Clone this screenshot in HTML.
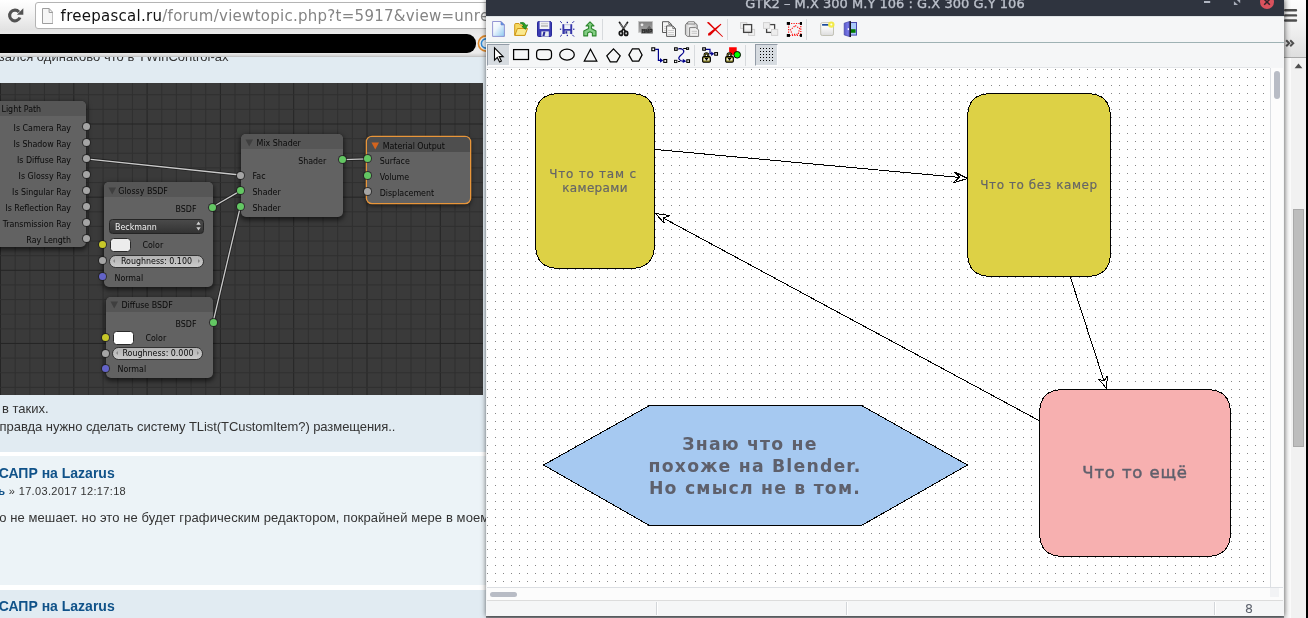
<!DOCTYPE html>
<html lang="ru">
<head>
<meta charset="utf-8">
<title>GTK2 – САПР на Lazarus</title>
<style>
html,body{margin:0;padding:0;}
body{width:1308px;height:618px;overflow:hidden;position:relative;background:#fff;font-family:"Liberation Sans","DejaVu Sans",sans-serif;}
.abs{position:absolute;}
/* ---------- browser (left) ---------- */
#br{position:absolute;left:0;top:0;width:1308px;height:618px;overflow:hidden;background:#fff;}
#br,#gtk,#rc,#rs{will-change:transform;}
#br .tb{position:absolute;left:0;top:0;width:1308px;height:30px;background:linear-gradient(#ffffff,#f7f7f7 35%,#e2e2e2);}
#br .bm{position:absolute;left:0;top:30px;width:1308px;height:27px;background:linear-gradient(#e6e6e6,#ececec 20%,#ebebeb 85%,#d4d4d4 96%,#b9b9b9);}
#url{position:absolute;left:34.5px;top:2px;width:700px;height:27px;box-sizing:border-box;border:1px solid #b4b4b4;border-radius:3px;background:#fff;}
#url .t{position:absolute;left:25.1px;top:3.7px;font:15px/19px "DejaVu Sans","Liberation Sans",sans-serif;color:#111;white-space:nowrap;letter-spacing:0.27px;}
#url .t span{color:#848484;}
#blk{position:absolute;left:-20px;top:34px;width:496px;height:19px;background:#000;border-radius:0 9px 9px 0;}
#forum{position:absolute;left:0;top:57px;width:1290px;height:561px;background:#fff;overflow:hidden;font-family:"Liberation Sans","DejaVu Sans",sans-serif;color:#333;}
.post{position:absolute;left:0;width:1290px;}
.p1{background:#e1ebf2;}
.p2{background:#ecf3f7;}
.ln{position:absolute;white-space:nowrap;font-size:13px;line-height:16px;color:#333;}
.h3{position:absolute;white-space:nowrap;font-size:14px;line-height:18px;font-weight:bold;color:#105289;}
.au{position:absolute;white-space:nowrap;font-size:11px;line-height:14px;color:#333;}
.au b{color:#105289;}
/* ---------- blender ---------- */
#bl{position:absolute;left:0;top:26px;width:483px;height:312px;background:#3a3a3a;overflow:hidden;font-family:"Liberation Sans","DejaVu Sans",sans-serif;}
.node{position:absolute;background:#626262;border-radius:5px;box-shadow:0 2px 5px 1px rgba(0,0,0,.6);}
.node .hd{position:absolute;left:0;top:0;right:0;height:15px;background:#565656;border-radius:5px 5px 0 0;}
.nt{position:absolute;white-space:nowrap;font:8.8px/12px "DejaVu Sans Condensed","Liberation Sans",sans-serif;color:#0a0a0a;}
.dd{position:absolute;box-sizing:border-box;background:linear-gradient(#4a4a4a,#333);border:1px solid #242424;border-radius:3.5px;}
.dd span{position:absolute;left:5px;top:0.6px;font:8.8px/12px "DejaVu Sans Condensed","Liberation Sans",sans-serif;color:#f2f2f2;}
.sw{position:absolute;box-sizing:border-box;background:#ececec;border:1px solid #2a2a2a;border-radius:3.5px;}
.pill{position:absolute;box-sizing:border-box;background:linear-gradient(#b4b4b4,#cacaca);border:1px solid #333;border-radius:7px;text-align:center;}
.pill span{position:absolute;left:0;right:0;top:-0.4px;font:8.8px/12px "DejaVu Sans Condensed","Liberation Sans",sans-serif;color:#0a0a0a;}
.pill:before,.pill:after{content:"";position:absolute;top:3.4px;border:2.5px solid transparent;}
.pill:before{left:1px;border-right-color:#8a8a8a;}
.pill:after{right:1px;border-left-color:#8a8a8a;}
.sk{position:absolute;width:7px;height:7px;border-radius:50%;box-shadow:0 0 0 1px rgba(30,30,30,.75);}
.sg{background:#a5a5a5;}
.sn{background:#63c763;}
.sy{background:#c7c729;}
.sb{background:#6363c7;}
/* ---------- gtk window ---------- */
#gtk{position:absolute;left:486px;top:0;width:798px;height:616px;background:#f5f6f7;box-shadow:0 0 5px 0 rgba(0,0,0,.6);overflow:hidden;}
#ttl{position:absolute;left:0;top:0;width:798px;height:16px;background:#2f343f;}
#ttl .t{position:absolute;left:0;width:798px;top:-4px;text-align:center;font:13px/16px "DejaVu Sans","Liberation Sans",sans-serif;color:#bcc1cb;white-space:nowrap;letter-spacing:0.02px;-webkit-text-stroke:0.35px #bcc1cb;}
#tb1{position:absolute;left:0;top:16px;width:798px;height:26px;background:#f5f6f7;border-top:1px solid #dfe4e6;box-sizing:border-box;}
#tbl{position:absolute;left:0;top:42px;width:798px;height:1px;background:#9fb2b4;}
#tb2{position:absolute;left:0;top:43px;width:798px;height:25px;background:#f5f6f7;}
.ic{position:absolute;width:16px;height:16px;overflow:visible;}
.sep{position:absolute;width:1px;background:#d7dadd;}
.prs{position:absolute;background:#d6dbe0;border:1px solid #929ba6;border-right-color:#fbfbfc;border-bottom-color:#fbfbfc;box-sizing:border-box;}
#cv{position:absolute;left:1px;top:68px;width:783px;height:519px;background:#fff;overflow:hidden;box-shadow:0 -1px 0 #e3e5e8;}
#vs{position:absolute;left:784px;top:68px;width:13px;height:519px;background:#fcfcfc;border-left:1px solid #dcdfe3;box-sizing:border-box;}
#hs{position:absolute;left:1px;top:587px;width:796px;height:14px;background:#fcfcfc;border-top:1px solid #dcdfe3;border-bottom:1px solid #dcdcdc;box-sizing:border-box;}
.th{position:absolute;background:#b8bcc5;border-radius:3px;}
#st{position:absolute;left:0;top:601px;width:798px;height:15px;background:#f5f6f7;}
#st .d{position:absolute;top:1px;width:2px;height:13px;background:#fff;border-left:1px solid #d3d6da;box-sizing:border-box;}
#st .n{position:absolute;left:759px;top:0.9px;font:12.5px/14px "DejaVu Sans","Liberation Sans",sans-serif;color:#5c616c;}
/* ---------- right chrome ---------- */
#rc{position:absolute;left:1284px;top:0;width:22px;height:58px;background:linear-gradient(#fdfdfd,#f2f2f2 45%,#dedede);border-bottom:1px solid #a9a9a9;box-sizing:border-box;}
#rs{position:absolute;left:1284px;top:58px;width:22px;height:560px;background:#f1f1f1;}
#rs .w{position:absolute;left:0;top:0;width:7px;height:561px;background:#fdfdfd;}
#rsh{position:absolute;left:1284px;top:0;width:7px;height:618px;background:linear-gradient(90deg,rgba(0,0,0,.10),rgba(0,0,0,.05) 45%,rgba(0,0,0,0));}
#rs .t{position:absolute;left:9px;top:151px;width:11px;height:238px;background:#bdbdbd;border:1px solid #a9a9a9;box-sizing:border-box;}
#rk{position:absolute;left:1306px;top:0;width:2px;height:618px;background:#000;}
</style>
</head>
<body>
<div id="br">
  <div class="tb"></div>
  <div class="bm"></div>
  <svg class="abs" style="left:7px;top:7px" width="18" height="17" viewBox="0 0 18 17"><path d="M12.96 10.50 A5.35 5.35 0 1 1 11.98 4.92" fill="none" stroke="#525252" stroke-width="3.1"/><path d="M16.3 1.2 V7.8 H9.9 Z" fill="#525252"/></svg>
  <div id="url">
    <svg class="abs" style="left:6.2px;top:4.5px" width="11.4" height="16" viewBox="0 0 12 16" preserveAspectRatio="none"><path d="M0.5 0.5 H7.5 L11.5 4.5 V15.5 H0.5 Z" fill="#f6f6f6" stroke="#9a9a9a"/><path d="M7.5 0.5 V4.5 H11.5" fill="none" stroke="#9a9a9a"/></svg>
    <div class="t">freepascal.ru<span>/forum/viewtopic.php?t=5917&amp;view=unread#unread</span></div>
  </div>
  <div id="blk"></div>
  <svg class="abs" style="left:476px;top:34px" width="20" height="20" viewBox="0 0 20 20"><circle cx="10" cy="9.5" r="7.6" fill="#f3ede6" stroke="#e08a2c" stroke-width="1.6"/><circle cx="10" cy="9.5" r="4.6" fill="#e9f2fa" stroke="#2f8ad8" stroke-width="1.6"/></svg>
  <div id="forum">
    <div class="post p1" style="top:0;height:395px;"></div>
    <div class="ln" style="left:-20.8px;top:-7.7px;letter-spacing:0.02px;">сказался одинаково что в TWinControl-ах</div>
    <div class="post p2" style="top:399px;height:129px;"></div>
    <div class="post p1" style="top:533px;height:90px;"></div>
    <div class="ln" style="left:2px;top:344px;">в таких.</div>
    <div class="ln" style="left:-13.2px;top:362.1px;letter-spacing:-0.073px;">И правда нужно сделать систему TList(TCustomItem?) размещения..</div>
    <div class="h3" style="left:-27.8px;top:406.8px;">Re: САПР на Lazarus</div>
    <div class="au" style="left:-68.3px;top:427px;letter-spacing:0.34px;"><b>Лекс Айринь</b> » 17.03.2017 12:17:18</div>
    <div class="ln" style="left:-13.2px;top:453px;letter-spacing:0.095px;">это не мешает. но это не будет графическим редактором, покрайней мере в моем понимании</div>
    <div class="h3" style="left:-27.8px;top:539.8px;">Re: САПР на Lazarus</div>
    <!-- BLENDER -->
    <div id="bl">
<!--BL-->
<svg class="abs" style="left:0;top:0" width="483" height="312" viewBox="0 0 483 312"><path d="M0.50 0 V312" stroke="#252525" stroke-width="1"/><path d="M15.16 0 V312" stroke="#303030" stroke-width="1"/><path d="M29.82 0 V312" stroke="#303030" stroke-width="1"/><path d="M44.48 0 V312" stroke="#303030" stroke-width="1"/><path d="M59.14 0 V312" stroke="#303030" stroke-width="1"/><path d="M73.80 0 V312" stroke="#252525" stroke-width="1"/><path d="M88.46 0 V312" stroke="#303030" stroke-width="1"/><path d="M103.12 0 V312" stroke="#303030" stroke-width="1"/><path d="M117.78 0 V312" stroke="#303030" stroke-width="1"/><path d="M132.44 0 V312" stroke="#303030" stroke-width="1"/><path d="M147.10 0 V312" stroke="#252525" stroke-width="1"/><path d="M161.76 0 V312" stroke="#303030" stroke-width="1"/><path d="M176.42 0 V312" stroke="#303030" stroke-width="1"/><path d="M191.08 0 V312" stroke="#303030" stroke-width="1"/><path d="M205.74 0 V312" stroke="#303030" stroke-width="1"/><path d="M220.40 0 V312" stroke="#252525" stroke-width="1"/><path d="M235.06 0 V312" stroke="#303030" stroke-width="1"/><path d="M249.72 0 V312" stroke="#303030" stroke-width="1"/><path d="M264.38 0 V312" stroke="#303030" stroke-width="1"/><path d="M279.04 0 V312" stroke="#303030" stroke-width="1"/><path d="M293.70 0 V312" stroke="#252525" stroke-width="1"/><path d="M308.36 0 V312" stroke="#303030" stroke-width="1"/><path d="M323.02 0 V312" stroke="#303030" stroke-width="1"/><path d="M337.68 0 V312" stroke="#303030" stroke-width="1"/><path d="M352.34 0 V312" stroke="#303030" stroke-width="1"/><path d="M367.00 0 V312" stroke="#252525" stroke-width="1"/><path d="M381.66 0 V312" stroke="#303030" stroke-width="1"/><path d="M396.32 0 V312" stroke="#303030" stroke-width="1"/><path d="M410.98 0 V312" stroke="#303030" stroke-width="1"/><path d="M425.64 0 V312" stroke="#303030" stroke-width="1"/><path d="M440.30 0 V312" stroke="#252525" stroke-width="1"/><path d="M454.96 0 V312" stroke="#303030" stroke-width="1"/><path d="M469.62 0 V312" stroke="#303030" stroke-width="1"/><path d="M0 11.74 H483" stroke="#303030" stroke-width="1"/><path d="M0 26.37 H483" stroke="#303030" stroke-width="1"/><path d="M0 41.00 H483" stroke="#252525" stroke-width="1"/><path d="M0 55.63 H483" stroke="#303030" stroke-width="1"/><path d="M0 70.26 H483" stroke="#303030" stroke-width="1"/><path d="M0 84.89 H483" stroke="#303030" stroke-width="1"/><path d="M0 99.52 H483" stroke="#303030" stroke-width="1"/><path d="M0 114.15 H483" stroke="#252525" stroke-width="1"/><path d="M0 128.78 H483" stroke="#303030" stroke-width="1"/><path d="M0 143.41 H483" stroke="#303030" stroke-width="1"/><path d="M0 158.04 H483" stroke="#303030" stroke-width="1"/><path d="M0 172.67 H483" stroke="#303030" stroke-width="1"/><path d="M0 187.30 H483" stroke="#252525" stroke-width="1"/><path d="M0 201.93 H483" stroke="#303030" stroke-width="1"/><path d="M0 216.56 H483" stroke="#303030" stroke-width="1"/><path d="M0 231.19 H483" stroke="#303030" stroke-width="1"/><path d="M0 245.82 H483" stroke="#303030" stroke-width="1"/><path d="M0 260.45 H483" stroke="#252525" stroke-width="1"/><path d="M0 275.08 H483" stroke="#303030" stroke-width="1"/><path d="M0 289.71 H483" stroke="#303030" stroke-width="1"/><path d="M0 304.34 H483" stroke="#303030" stroke-width="1"/></svg>
<div class="node" style="left:-20.0px;top:18.0px;width:106.0px;height:145.6px;"><div class="hd" style="background:#565656"></div><div class="nt" style="left:21.5px;top:2px;">Light Path</div><div class="nt r" style="right:15px;top:21.1px;">Is Camera Ray</div><div class="nt r" style="right:15px;top:37.1px;">Is Shadow Ray</div><div class="nt r" style="right:15px;top:53.1px;">Is Diffuse Ray</div><div class="nt r" style="right:15px;top:69.1px;">Is Glossy Ray</div><div class="nt r" style="right:15px;top:85.1px;">Is Singular Ray</div><div class="nt r" style="right:15px;top:101.1px;">Is Reflection Ray</div><div class="nt r" style="right:15px;top:117.1px;">Is Transmission Ray</div><div class="nt r" style="right:15px;top:133.1px;">Ray Length</div></div>
<div class="node" style="left:103.7px;top:98.7px;width:109.3px;height:105.6px;"><div class="hd" style="background:#565656"></div><svg class="abs" style="left:4px;top:5.3px" width="9" height="8" viewBox="0 0 9 8"><path d="M0.5 0.5 H8 L4.25 7.5 Z" fill="#3f3f3f"/></svg><div class="nt" style="left:14.6px;top:3.3px;">Glossy BSDF</div><div class="nt r" style="right:16.5px;top:21.3px;">BSDF</div><div class="dd" style="left:5.3px;top:37.3px;width:95px;height:15px;"><span>Beckmann</span><svg class="abs" style="right:2px;top:1.5px" width="5" height="10" viewBox="0 0 5 10"><path d="M2.5 0.5 L4.7 3.8 H0.3 Z M2.5 9.5 L4.7 6.2 H0.3 Z" fill="#cfcfcf"/></svg></div><div class="sw" style="left:5.9px;top:56.0px;width:21px;height:14px;"></div><div class="nt" style="left:38.8px;top:57.1px;">Color</div><div class="pill" style="left:5.3px;top:72.9px;width:95px;height:13.4px;"><span>Roughness: 0.100</span></div><div class="nt" style="left:10.8px;top:89.9px;">Normal</div></div>
<div class="node" style="left:106.2px;top:213.7px;width:106.8px;height:81.6px;"><div class="hd" style="background:#565656"></div><svg class="abs" style="left:4px;top:4px" width="9" height="8" viewBox="0 0 9 8"><path d="M0.5 0.5 H8 L4.25 7.5 Z" fill="#3f3f3f"/></svg><div class="nt" style="left:15.3px;top:2px;">Diffuse BSDF</div><div class="nt r" style="right:16.5px;top:20.9px;">BSDF</div><div class="sw" style="left:6.4px;top:34.2px;width:21px;height:14px;background:#fff;"></div><div class="nt" style="left:39.3px;top:34.9px;">Color</div><div class="pill" style="left:6.3px;top:50.2px;width:91px;height:13.4px;"><span>Roughness: 0.000</span></div><div class="nt" style="left:11.3px;top:66.1px;">Normal</div></div>
<div class="node" style="left:240.6px;top:51.0px;width:102.6px;height:83.4px;"><div class="hd" style="background:#565656"></div><svg class="abs" style="left:4px;top:5px" width="9" height="8" viewBox="0 0 9 8"><path d="M0.5 0.5 H8 L4.25 7.5 Z" fill="#3f3f3f"/></svg><div class="nt" style="left:16.0px;top:3px;">Mix Shader</div><div class="nt r" style="right:17px;top:20.7px;">Shader</div><div class="nt" style="left:12.0px;top:35.8px;">Fac</div><div class="nt" style="left:12.0px;top:51.8px;">Shader</div><div class="nt" style="left:12.0px;top:67.8px;">Shader</div></div>
<div class="node" style="left:367.2px;top:54.2px;width:102.8px;height:65.8px;box-shadow:0 0 0 1.3px #e9963a,0 2px 5px 1px rgba(0,0,0,.55);"><div class="hd" style="background:#4e4e4e"></div><svg class="abs" style="left:4px;top:5px" width="9" height="8" viewBox="0 0 9 8"><path d="M0.5 0.5 H8 L4.25 7.5 Z" fill="#d4641e"/></svg><div class="nt" style="left:15.5px;top:3px;">Material Output</div><div class="nt" style="left:12.5px;top:17.7px;">Surface</div><div class="nt" style="left:12.5px;top:33.7px;">Volume</div><div class="nt" style="left:12.5px;top:49.7px;">Displacement</div></div>
<svg class="abs" style="left:0;top:0" width="483" height="312" viewBox="0 0 483 312"><path d="M86 75.80000000000001 L240.3 92" stroke="#202020" stroke-width="3" fill="none"/><path d="M86 75.80000000000001 L240.3 92" stroke="#cacaca" stroke-width="1.3" fill="none"/><path d="M212.6 124 L240.3 107.9" stroke="#202020" stroke-width="3" fill="none"/><path d="M212.6 124 L240.3 107.9" stroke="#cacaca" stroke-width="1.3" fill="none"/><path d="M213 239.3 L240.3 123.80000000000001" stroke="#202020" stroke-width="3" fill="none"/><path d="M213 239.3 L240.3 123.80000000000001" stroke="#cacaca" stroke-width="1.3" fill="none"/><path d="M342.9 76.6 L367.3 75.9" stroke="#202020" stroke-width="3" fill="none"/><path d="M342.9 76.6 L367.3 75.9" stroke="#cacaca" stroke-width="1.3" fill="none"/></svg>
<div class="sk sg" style="left:82.5px;top:40.3px;"></div>
<div class="sk sg" style="left:82.5px;top:56.3px;"></div>
<div class="sk sg" style="left:82.5px;top:72.3px;"></div>
<div class="sk sg" style="left:82.5px;top:88.3px;"></div>
<div class="sk sg" style="left:82.5px;top:104.3px;"></div>
<div class="sk sg" style="left:82.5px;top:120.3px;"></div>
<div class="sk sg" style="left:82.5px;top:136.3px;"></div>
<div class="sk sg" style="left:82.5px;top:152.3px;"></div>
<div class="sk sn" style="left:209.1px;top:120.5px;"></div>
<div class="sk sy" style="left:99.1px;top:158.0px;"></div>
<div class="sk sg" style="left:99.1px;top:174.3px;"></div>
<div class="sk sb" style="left:99.1px;top:190.0px;"></div>
<div class="sk sn" style="left:209.5px;top:235.8px;"></div>
<div class="sk sy" style="left:102.1px;top:250.7px;"></div>
<div class="sk sg" style="left:102.1px;top:266.5px;"></div>
<div class="sk sb" style="left:102.1px;top:281.8px;"></div>
<div class="sk sn" style="left:339.4px;top:73.1px;"></div>
<div class="sk sg" style="left:236.8px;top:88.5px;"></div>
<div class="sk sn" style="left:236.8px;top:104.4px;"></div>
<div class="sk sn" style="left:236.8px;top:120.3px;"></div>
<div class="sk sn" style="left:363.8px;top:72.4px;"></div>
<div class="sk sn" style="left:363.8px;top:88.5px;"></div>
<div class="sk sg" style="left:363.8px;top:104.7px;"></div>
<!--/BL-->
    </div>
  </div>
</div>

<div id="rc">
  <svg class="abs" style="left:0;top:8px" width="16" height="16" viewBox="0 0 16 16"><g stroke="#4e4e4e" stroke-width="2.4" stroke-linecap="round"><path d="M1.2 2.3 H12 M1.2 7.4 H12 M1.2 12.5 H12"/></g></svg>
  <svg class="abs" style="left:1px;top:39px" width="12" height="9" viewBox="0 0 12 9"><path d="M1.2 1.3 L4.2 4.3 L1.2 7.3 M5.2 1.3 L8.2 4.3 L5.2 7.3" fill="none" stroke="#4f4f4f" stroke-width="2"/></svg>
</div>
<div id="rs"><div class="w"></div><div class="t"></div>
  <svg class="abs" style="left:10px;top:5px" width="9" height="6" viewBox="0 0 9 6"><path d="M4.5 0.6 L8.4 5.2 H0.6 Z" fill="#505050"/></svg>
</div>
<div id="rsh"></div>
<div id="rk"></div>
<div style="position:absolute;left:486px;top:616px;width:798px;height:2px;background:linear-gradient(#6e7277,#8d9196);"></div>

<div id="gtk">
  <div id="ttl"><svg class="abs" style="left:710px;top:0" width="88" height="16" viewBox="1196 0 88 16"><rect x="1204" y="1" width="6.2" height="2" fill="#b1b6c1"/><path d="M1233.9 1.2 V5 H1238.1 Z M1235.9 -1 H1240.2 V3.3 Z" fill="#a9aeba"/><circle cx="1267" cy="2" r="7" fill="#d9525d"/><path d="M1264.2 -0.8 L1269.8 4.8 M1269.8 -0.8 L1264.2 4.8" stroke="#2f2229" stroke-width="1.5"/></svg><div class="t">GTK2 – M.X 300 M.Y 106 : G.X 300 G.Y 106</div></div>
<!--TB-->
<svg width="0" height="0" style="position:absolute"><defs>
<linearGradient id="gn" x1="0" y1="0" x2="1" y2="1"><stop offset="0" stop-color="#ffffff"/><stop offset=".4" stop-color="#eef6fd"/><stop offset="1" stop-color="#8cc8f0"/></linearGradient>
<linearGradient id="gw" x1="0" y1="0" x2="0" y2="1"><stop offset="0" stop-color="#ffffff"/><stop offset=".45" stop-color="#f6f6f6"/><stop offset="1" stop-color="#dcdcdc"/></linearGradient>
<linearGradient id="gb" x1="0" y1="0" x2="0" y2="1"><stop offset="0" stop-color="#808080"/><stop offset="1" stop-color="#ababab"/></linearGradient>
<linearGradient id="gp" x1="0" y1="0" x2="1" y2="0"><stop offset="0" stop-color="#c4c4c4"/><stop offset=".35" stop-color="#f0f0f0"/><stop offset="1" stop-color="#cfcfcf"/></linearGradient>
<linearGradient id="gd" x1="0" y1="0" x2="1" y2="0"><stop offset="0" stop-color="#5a5ac8"/><stop offset=".6" stop-color="#7878e8"/><stop offset="1" stop-color="#5050b8"/></linearGradient>
</defs></svg>
<div id="tb1"></div><div id="tbl"></div><div id="tb2"></div>
<div class="prs" style="left:1px;top:44px;width:23px;height:22px;"></div>
<div class="prs" style="left:269px;top:44px;width:23px;height:22px;"></div>
<div class="sep" style="left:116px;top:19px;height:21px;"></div>
<div class="sep" style="left:241px;top:19px;height:21px;"></div>
<div class="sep" style="left:320px;top:19px;height:21px;"></div>
<div class="sep" style="left:208px;top:45px;height:21px;"></div>
<div class="sep" style="left:259px;top:45px;height:21px;"></div>
<svg class="ic" style="left:5px;top:21px" width="16" height="16" viewBox="0 0 16 16" ><path d="M1.6 0.5 H10 L13.4 3.9 V15.4 H1.6 Z" fill="url(#gn)" stroke="#8284cc" stroke-width=".85"/><path d="M10 0.6 V3.9 H13.3 Z" fill="#4a98ee" stroke="#7a7cc4" stroke-width=".7"/></svg>
<svg class="ic" style="left:28px;top:21px" width="16" height="16" viewBox="0 0 16 16" ><path d="M0.7 3.6 Q0.7 2.5 1.8 2.5 H5 L6.4 4 H11 V14.3 H0.7 Z" fill="#f6d860" stroke="#cf9716"/><path d="M0.9 14.4 L3.4 7.5 H13.5 L10.9 14.4 Z" fill="#fbe98e" stroke="#cf9716"/><path d="M6 1.9 Q10.6 0.2 11.7 4.4 L13.7 3.8 L11.5 8.3 L7.9 5.6 L9.9 5 Q9.2 2.8 6 1.9 Z" fill="#2aa22a" stroke="#0f730f" stroke-width=".7"/></svg>
<svg class="ic" style="left:51px;top:21px" width="16" height="16" viewBox="0 0 16 16" ><path d="M0.5 1.6 Q0.5 0.5 1.6 0.5 H13.6 L14.5 1.5 V14.4 Q14.5 15.5 13.4 15.5 H1.6 Q0.5 15.5 0.5 14.4 Z" fill="#3b3bb2" stroke="#2a2a9a"/><rect x="2.6" y="0.4" width="9.8" height="7.6" fill="#f3f3f7"/><rect x="4" y="1.8" width="7" height="1.2" fill="#cfcfcf"/><rect x="4" y="3.8" width="7" height="2.2" fill="#c2c2c2"/><rect x="4.4" y="10.4" width="7.4" height="5.2" fill="#e6ecee"/><path d="M5.4 15 L6.4 10.8 H8.4 L7.6 15 Z" fill="#2a2a9a"/></svg>
<svg class="ic" style="left:74px;top:21px" width="16" height="16" viewBox="0 0 16 16" ><rect x="2.4" y="3.2" width="9.8" height="9.8" fill="#3636aa"/><rect x="4.3" y="3.2" width="6" height="4.8" fill="#eef0fb"/><rect x="4.3" y="3.4" width="6" height="0.8" fill="#c8c8d8"/><rect x="4.8" y="9.7" width="5.4" height="3.3" fill="#dde4e6"/><rect x="5.4" y="10.2" width="1.8" height="2.4" fill="#2a2a9a"/><g stroke="#2b2ba4" stroke-width="1" stroke-linecap="round"><path d="M0.4 0.5 L1.7 1.8 M13.8 0.5 L12.5 1.8 M0.4 15.3 L1.7 14 M13.8 15.3 L12.5 14"/></g><g fill="#2b2ba4"><rect x="6.7" y="0.8" width="1.3" height="1.3"/><rect x="6.7" y="13.8" width="1.3" height="1.3"/><rect x="-0.1" y="7.6" width="1.3" height="1.3"/><rect x="13.1" y="7.6" width="1.3" height="1.3"/></g></svg>
<svg class="ic" style="left:97px;top:21px" width="16" height="16" viewBox="0 0 16 16" ><path d="M7 0.9 L11 4.9 H8.4 V7.5 L13 9.9 V14.9 H9.4 V12 L7 10.7 L4.6 12 V14.9 H0.8 V9.9 L5.6 7.5 V4.9 H3.1 Z" fill="#84ce84" stroke="#2d872d" stroke-width="1.1" stroke-linejoin="round"/></svg>
<svg class="ic" style="left:129px;top:21px" width="16" height="16" viewBox="0 0 16 16" ><g stroke="#141414" fill="none" stroke-linecap="round"><path d="M4.4 1.3 L10.3 10.3 M12.6 1.3 L6.7 10.3" stroke-width="1.6"/><path d="M5.2 2.6 L8 7 M11.8 2.6 L9 7" stroke="#eee" stroke-width=".5"/><ellipse cx="5.9" cy="12.4" rx="1.6" ry="2" stroke-width="1.7" fill="#f5f6f7"/><ellipse cx="11.1" cy="12.4" rx="1.6" ry="2" stroke-width="1.7" fill="#f5f6f7"/></g></svg>
<svg class="ic" style="left:152px;top:21px" width="16" height="16" viewBox="0 0 16 16" ><rect x="0.6" y="0.5" width="14" height="10.8" fill="url(#gb)" stroke="#c4c4c4" stroke-width=".7"/><circle cx="4" cy="3.8" r="1.4" fill="#ececec"/><path d="M8.5 8 L11.2 4.6 L14 8 Z" fill="#686868"/><rect x="3.2" y="7.9" width="11.6" height="4.7" fill="#6c6c6c"/><text x="9.1" y="12" font-family="Liberation Sans, DejaVu Sans, sans-serif" font-size="4.6" font-weight="bold" fill="#161616" text-anchor="middle">BMP</text></svg>
<svg class="ic" style="left:175px;top:21px" width="16" height="16" viewBox="0 0 16 16" ><path d="M1.5 0.7 H7.8 L10.5 3.4 V11.5 H1.5 Z" fill="#f4f4f4" stroke="#5a5a5a"/><path d="M7.8 0.7 V3.4 H10.5" fill="none" stroke="#5a5a5a" stroke-width=".8"/><path d="M3 5.5 H6 M3 7.5 H6 M3 9.5 H6" stroke="#d4d4d4"/><path d="M5.6 4.9 H11.8 L14.5 7.6 V15.4 H5.6 Z" fill="#f7f7f7" stroke="#5a5a5a"/><path d="M11.8 4.9 V7.6 H14.5" fill="none" stroke="#5a5a5a" stroke-width=".8"/><path d="M7.2 9.5 H13 M7.2 11.5 H13 M7.2 13.5 H13" stroke="#cdcdcd"/></svg>
<svg class="ic" style="left:198px;top:21px" width="16" height="16" viewBox="0 0 16 16" ><path d="M1.4 4 L3.2 1.6 H11 L13.2 4 V14 Q13.2 15.4 11.8 15.4 H3.4 L1.4 13.6 Z" fill="url(#gp)" stroke="#7c7c7c"/><path d="M4.2 0.7 H10.2 L11.2 3 H3.2 Z" fill="#ededed" stroke="#7c7c7c" stroke-width=".9"/><path d="M5.6 6.6 H11.6 L14.6 8.8 V15.4 H5.6 Z" fill="#f1f1f1" stroke="#7c7c7c"/><path d="M7.6 10.4 H13 M7.6 12.4 H13" stroke="#cfcfcf" stroke-width="1.2"/></svg>
<svg class="ic" style="left:221px;top:21px" width="16" height="16" viewBox="0 0 16 16" ><path d="M-0.2 1.6 L1.8 0.9 L16 15.4 L15.4 16 Z" fill="#e00000"/><path d="M13.7 2.8 L14.4 3.6 L3.2 14.6 L1 14.6 L1.2 12.4 Z" fill="#e00000"/></svg>
<svg class="ic" style="left:254px;top:21px" width="16" height="16" viewBox="0 0 16 16" ><rect x="0.6" y="1.6" width="6.2" height="5.8" fill="#f0f0f0" stroke="#d0d0d0"/><rect x="8.6" y="8.4" width="6" height="6" fill="#f0f0f0" stroke="#d0d0d0"/><rect x="3.6" y="3.6" width="8" height="7.8" fill="url(#gw)" stroke="#444" stroke-width="1.3"/></svg>
<svg class="ic" style="left:277px;top:21px" width="16" height="16" viewBox="0 0 16 16" ><rect x="3.6" y="3.6" width="8" height="7.8" fill="#fbfbfb" stroke="#444" stroke-width="1.3"/><rect x="0.5" y="1.6" width="6.2" height="5.8" fill="#ededed" stroke="#d2d2d2"/><rect x="8.5" y="8.4" width="6.2" height="6" fill="#ededed" stroke="#d2d2d2"/></svg>
<svg class="ic" style="left:300px;top:21px" width="16" height="16" viewBox="0 0 16 16" ><rect x="2.6" y="2.5" width="12.2" height="12" fill="none" stroke="#ff1010" stroke-width="1.2" stroke-dasharray="1.2 1.25"/><polygon points="9.2,4.6 13.6,7.4 12.2,13.4 6.4,13.4 4.4,9" fill="none" stroke="#ff1010" stroke-width="1.2" stroke-dasharray="1.2 1.2"/><g fill="#000"><rect x="0.8" y="1" width="3.2" height="2.9"/><rect x="13.9" y="1" width="2.1" height="2.9"/><rect x="0.8" y="13" width="3.2" height="2.9"/><rect x="13.9" y="13" width="2.1" height="2.9"/></g></svg>
<svg class="ic" style="left:334px;top:21px" width="16" height="16" viewBox="0 0 16 16" ><rect x="0.7" y="1.7" width="12.8" height="12.8" rx="1.6" fill="url(#gw)" stroke="#c2c2b6"/><rect x="2.1" y="3" width="6.6" height="1.7" fill="#1b4b9b"/><circle cx="11.3" cy="3.6" r="3.2" fill="#f3ec3e" opacity=".92"/><circle cx="11.3" cy="3.6" r="1" fill="#fffef0"/></svg>
<svg class="ic" style="left:357px;top:21px" width="16" height="16" viewBox="0 0 16 16" ><rect x="6.6" y="1.5" width="6.9" height="12.6" fill="#a9c9f9" stroke="#4848ac"/><rect x="7.8" y="8.2" width="4.8" height="3.6" fill="#007a00"/><path d="M1.2 2.2 L7.3 0.3 V15.8 L1.2 13.9 Z" fill="url(#gd)" stroke="#4444a6" stroke-width=".7"/><path d="M7.3 0.2 V15.9" stroke="#15151e" stroke-width="1.4"/><rect x="4.7" y="7.2" width="1.3" height="1.9" fill="#fff"/></svg>
<svg class="ic" style="left:4px;top:47px" width="16" height="16" viewBox="0 0 16 16" ><path d="M4.5 0.8 V13.2 L7.3 10.4 L9.6 14.9 L11.4 14 L9.2 9.6 H13.2 Z" fill="#fff" stroke="#000" stroke-width="1.1" stroke-linejoin="miter"/></svg>
<svg class="ic" style="left:27px;top:47px" width="16" height="16" viewBox="0 0 16 16" ><rect x="0.6" y="2.6" width="14.9" height="9.9" stroke="#000" fill="none" stroke-width="1.25"/></svg>
<svg class="ic" style="left:50px;top:47px" width="16" height="16" viewBox="0 0 16 16" ><rect x="0.6" y="2.6" width="14.9" height="9.9" rx="3.4" stroke="#000" fill="none" stroke-width="1.25"/></svg>
<svg class="ic" style="left:73px;top:47px" width="16" height="16" viewBox="0 0 16 16" ><ellipse cx="8" cy="7.7" rx="7.3" ry="5.5" stroke="#000" fill="none" stroke-width="1.25"/></svg>
<svg class="ic" style="left:96px;top:47px" width="16" height="16" viewBox="0 0 16 16" ><polygon points="8.5,2.3 2.3,14 14.8,14" stroke="#000" fill="none" stroke-width="1.25"/></svg>
<svg class="ic" style="left:119px;top:47px" width="16" height="16" viewBox="0 0 16 16" ><polygon points="8.5,1.9 15.2,8.8 11.7,14.9 5.3,14.9 1.8,8.8" stroke="#000" fill="none" stroke-width="1.25"/></svg>
<svg class="ic" style="left:142px;top:47px" width="16" height="16" viewBox="0 0 16 16" ><polygon points="0.9,7.9 4.4,1.8 10.8,1.8 14.1,7.9 10.8,14 4.4,14" stroke="#000" fill="none" stroke-width="1.25"/></svg>
<svg class="ic" style="left:165px;top:47px" width="16" height="16" viewBox="0 0 16 16" ><path d="M4.2 2.4 H7.4 V13.4 H10" fill="none" stroke="#00008c" stroke-width="1.2"/><polygon points="9,11 12.2,13.4 9,15.7" fill="#00008c"/><rect x="0.8" y="0.8" width="2.9" height="2.9" fill="#fff" stroke="#000" stroke-width="1.1"/><rect x="12.8" y="12.5" width="2.9" height="2.9" fill="#fff" stroke="#000" stroke-width="1.1"/></svg>
<svg class="ic" style="left:188px;top:47px" width="16" height="16" viewBox="0 0 16 16" ><path d="M5 1.5 H7.6 M9.2 1.5 H12 M4 14.5 H6.2" stroke="#000" stroke-width="1.1" fill="none"/><path d="M3.8 2 C7 1.2 10.6 2.4 9.6 5.4 C8.6 8 3.6 9 5 12 C5.8 13.6 7.8 14.2 9.4 14.3" fill="none" stroke="#00008c" stroke-width="1.2"/><polygon points="8.8,11.8 12.3,14.3 8.8,16" fill="#00008c"/><rect x="0.6" y="0.8" width="2.6" height="2.5" fill="#fff" stroke="#000" stroke-width="1.1"/><rect x="12.5" y="0.8" width="2.1" height="1.6" fill="#fff" stroke="#000" stroke-width="1"/><rect x="0.5" y="13.3" width="2.4" height="2.3" fill="#fff" stroke="#000" stroke-width=".9"/><rect x="12.8" y="12.8" width="2.7" height="2.6" fill="#fff" stroke="#000" stroke-width="1.1"/></svg>
<svg class="ic" style="left:216px;top:47px" width="16" height="16" viewBox="0 0 16 16" ><path d="M3.9 2.3 H8 V6.7 H9.8" fill="none" stroke="#00008c" stroke-width="1.2"/><polygon points="9.2,4.5 12.2,6.7 9.2,8.9" fill="#00008c"/><rect x="0.7" y="0.8" width="2.7" height="2.4" fill="#fff" stroke="#000" stroke-width="1.1"/><rect x="12.7" y="5.6" width="2.8" height="2.6" fill="#fff" stroke="#000" stroke-width="1.1"/><g transform="translate(0,0)"><path d="M2.6 9.8 V8 Q2.6 6.4 4.4 6.4 Q6.2 6.4 6.2 8 V9.8" fill="none" stroke="#000" stroke-width="2.1"/><path d="M2.6 9.8 V8 Q2.6 6.4 4.4 6.4 Q6.2 6.4 6.2 8 V9.8" fill="none" stroke="#8c8424" stroke-width=".8"/><rect x="0.6" y="9.6" width="7.8" height="5.6" rx="1.2" fill="#8c8424" stroke="#000" stroke-width="1.1"/><rect x="1.6" y="11.3" width="5.8" height="2.2" fill="#f4f4e0"/><path d="M3 11.6 H6 M4.5 11.6 V13.6" stroke="#000" stroke-width="1.2"/></g></svg>
<svg class="ic" style="left:239px;top:47px" width="16" height="16" viewBox="0 0 16 16" ><polygon points="4.1,0.3 11.7,0.3 11.7,4.6 9.6,7.8 6,7.8 4.1,4.6" fill="#ff0000"/><circle cx="12.2" cy="7.8" r="3.3" fill="#00ff00" stroke="#000" stroke-width="1"/><g transform="translate(0,0)"><path d="M2.6 9.8 V8 Q2.6 6.4 4.4 6.4 Q6.2 6.4 6.2 8 V9.8" fill="none" stroke="#000" stroke-width="2.1"/><path d="M2.6 9.8 V8 Q2.6 6.4 4.4 6.4 Q6.2 6.4 6.2 8 V9.8" fill="none" stroke="#8c8424" stroke-width=".8"/><rect x="0.6" y="9.6" width="7.8" height="5.6" rx="1.2" fill="#8c8424" stroke="#000" stroke-width="1.1"/><rect x="1.6" y="11.3" width="5.8" height="2.2" fill="#f4f4e0"/><path d="M3 11.6 H6 M4.5 11.6 V13.6" stroke="#000" stroke-width="1.2"/></g></svg>
<svg class="abs" style="left:0;top:0" width="798" height="68" viewBox="486 0 798 68" shape-rendering="crispEdges"><rect x="759.6" y="47.6" width="1.3" height="1.3" fill="#000"/><rect x="759.6" y="50.7" width="1.3" height="1.3" fill="#000"/><rect x="759.6" y="53.8" width="1.3" height="1.3" fill="#000"/><rect x="759.6" y="56.9" width="1.3" height="1.3" fill="#000"/><rect x="759.6" y="60" width="1.3" height="1.3" fill="#000"/><rect x="762.7" y="47.6" width="1.3" height="1.3" fill="#000"/><rect x="762.7" y="50.7" width="1.3" height="1.3" fill="#000"/><rect x="762.7" y="53.8" width="1.3" height="1.3" fill="#000"/><rect x="762.7" y="56.9" width="1.3" height="1.3" fill="#000"/><rect x="762.7" y="60" width="1.3" height="1.3" fill="#000"/><rect x="765.8" y="47.6" width="1.3" height="1.3" fill="#000"/><rect x="765.8" y="50.7" width="1.3" height="1.3" fill="#000"/><rect x="765.8" y="53.8" width="1.3" height="1.3" fill="#000"/><rect x="765.8" y="56.9" width="1.3" height="1.3" fill="#000"/><rect x="765.8" y="60" width="1.3" height="1.3" fill="#000"/><rect x="768.9" y="47.6" width="1.3" height="1.3" fill="#000"/><rect x="768.9" y="50.7" width="1.3" height="1.3" fill="#000"/><rect x="768.9" y="53.8" width="1.3" height="1.3" fill="#000"/><rect x="768.9" y="56.9" width="1.3" height="1.3" fill="#000"/><rect x="768.9" y="60" width="1.3" height="1.3" fill="#000"/><rect x="772" y="47.6" width="1.3" height="1.3" fill="#000"/><rect x="772" y="50.7" width="1.3" height="1.3" fill="#000"/><rect x="772" y="53.8" width="1.3" height="1.3" fill="#000"/><rect x="772" y="56.9" width="1.3" height="1.3" fill="#000"/><rect x="772" y="60" width="1.3" height="1.3" fill="#000"/></svg>
<!--/TB-->
  <div id="cv">
<svg class="abs" style="left:0;top:0" width="784" height="520" viewBox="0 0 784 520" shape-rendering="crispEdges" font-family="DejaVu Sans, Liberation Sans, sans-serif">
<defs><pattern id="dots" x="0" y="1" width="8" height="8" patternUnits="userSpaceOnUse"><rect x="0" y="0" width="1" height="1" fill="#858585"/></pattern></defs>
<rect x="0" y="0" width="784" height="520" fill="url(#dots)"/>
<!-- connectors -->
<g stroke="#000" stroke-width="1" fill="none">
<line x1="168.5" y1="81.5" x2="473" y2="109.5"/>
<line x1="583.5" y1="209.5" x2="617" y2="313"/>
<line x1="552.5" y1="352.8" x2="176" y2="149.9"/>
</g>
<g stroke="#000" stroke-width="1" fill="#fff">
<polygon points="480.5,110.5 467.4,104 472.6,109.30000000000001 466.20000000000005,114.80000000000001"/>
<polygon points="168.5,145.5 183,147.5 176,150 177.29999999999995,155.3"/>
<polygon points="619.5,320.5 612,311.5 617,313 620.4000000000001,307.7"/>
</g>
<!-- shapes -->
<g stroke="#000" stroke-width="1" shape-rendering="crispEdges">
<path d="M73.5 25.5 H142.5 C160 25.5 167.5 33 167.5 50.5 V175.5 C167.5 193 160 200.5 142.5 200.5 H73.5 C56 200.5 48.5 193 48.5 175.5 V50.5 C48.5 33 56 25.5 73.5 25.5 Z" fill="#ddd145"/>
<path d="M505.5 25.5 H598.5 C616 25.5 623.5 33 623.5 50.5 V183.5 C623.5 201 616 208.5 598.5 208.5 H505.5 C488 208.5 480.5 201 480.5 183.5 V50.5 C480.5 33 488 25.5 505.5 25.5 Z" fill="#ddd145"/>
<path d="M577.5 321.5 H718.5 C736 321.5 743.5 329 743.5 346.5 V463.5 C743.5 481 736 488.5 718.5 488.5 H577.5 C560 488.5 552.5 481 552.5 463.5 V346.5 C552.5 329 560 321.5 577.5 321.5 Z" fill="#f7b0b0"/>
<polygon points="56.5,397 162.5,337.5 374.5,337.5 480.5,397 374.5,457.5 162.5,457.5" fill="#a6c9f1"/>
</g>
<g shape-rendering="auto" text-anchor="middle" fill="#666" stroke="#666" stroke-width="0.2">
<text x="106" y="110" font-size="12" letter-spacing="0.77">Что то там с</text>
<text x="108" y="124" font-size="12" letter-spacing="0.34">камерами</text>
<text x="552" y="121" font-size="12" letter-spacing="0.58">Что то без камер</text>
<text x="648" y="410" font-size="16.5" letter-spacing="0.85" fill="#60606c" stroke="#60606c" stroke-width="0.45">Что то ещё</text>
<g font-weight="bold" font-size="17.3" letter-spacing="1.2" fill="#5e606c" stroke="none">
<text x="263" y="382">Знаю что не</text>
<text x="268" y="404">похоже на Blender.</text>
<text x="268" y="426">Но смысл не в том.</text>
</g>
</g>
</svg>
</div>
  <div id="vs"><div class="th" style="left:3.2px;top:3.2px;width:5.8px;height:27.6px;"></div></div>
  <div id="hs"><div class="th" style="left:2.5px;top:3.5px;width:27.5px;height:5.5px;"></div><div style="position:absolute;left:783px;top:0px;width:9px;height:9px;background:#f2f3f5;"></div></div>
  <div id="st"><div class="d" style="left:170px"></div><div class="d" style="left:360px"></div><div class="d" style="left:728px"></div><div class="n">8</div></div>
</div>
</body>
</html>
